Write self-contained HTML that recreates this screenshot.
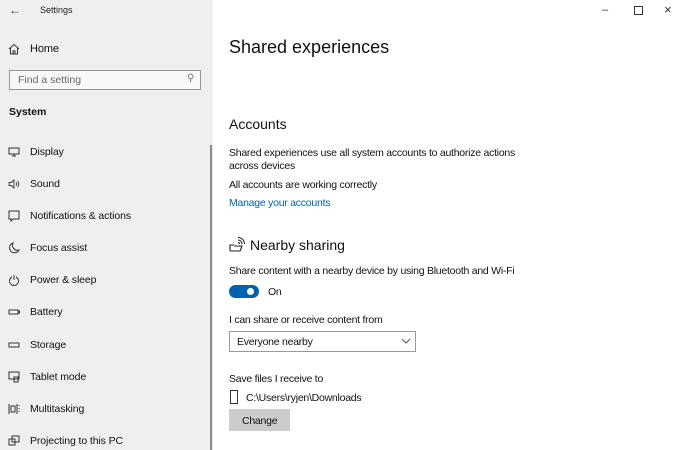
<!DOCTYPE html>
<html><head><style>
body{margin:0;width:680px;height:450px;overflow:hidden;font-family:"Liberation Sans",sans-serif;background:#fff;position:relative;color:#000}
.a{position:absolute;white-space:nowrap}
#side{position:absolute;left:0;top:0;width:213px;height:450px;background:#efefef}
.it{position:absolute;left:30px;font-size:10.5px;color:#111;letter-spacing:-0.1px}
.ic{position:absolute;left:8px;width:12px;height:12px}
.r{font-size:10.5px;color:#111;letter-spacing:-0.25px}
</style></head><body>
<div id="side">
<div class="a" style="left:9px;top:3px;font-size:12px;color:#333">←</div>
<div class="a" style="left:40px;top:5px;font-size:9px;color:#222">Settings</div>
<svg class="ic" style="top:43px" viewBox="0 0 12 12"><path d="M1 6L6 1.5 11 6M2.5 5v6h7V5M5 11V8h2v3" fill="none" stroke="#333" stroke-width="1"/></svg>
<div class="it" style="top:43px;font-size:11px">Home</div>
<div class="a" style="left:9px;top:70px;width:190px;height:18px;border:1px solid #999;background:#f8f8f8"></div>
<div class="a" style="left:18px;top:74px;font-size:10.5px;color:#666">Find a setting</div>
<div class="a" style="left:187px;top:73px;font-size:10px;color:#777">⚲</div>
<div class="a" style="left:9px;top:106px;font-size:10.5px;font-weight:bold;color:#111">System</div>
<div class="a" style="left:210px;top:145px;width:2px;height:305px;background:#8a8a8a"></div>
<svg class="ic" style="top:146px" viewBox="0 0 12 12"><path d="M1 2h10v6H1zM6 8v2M4 10h4" fill="none" stroke="#333"/></svg>
<div class="it" style="top:146px">Display</div>
<svg class="ic" style="top:178px" viewBox="0 0 12 12"><path d="M1 4.5h2l3-2.5v8L3 7.5H1zM8 4.5a2 2 0 0 1 0 3M9.5 3a4 4 0 0 1 0 6" fill="none" stroke="#333" stroke-width="0.9"/></svg>
<div class="it" style="top:178px">Sound</div>
<svg class="ic" style="top:210px" viewBox="0 0 12 12"><path d="M1 1h10v8H5l-2 2V9H1z" fill="none" stroke="#333"/></svg>
<div class="it" style="top:210px">Notifications &amp; actions</div>
<svg class="ic" style="top:242px" viewBox="0 0 12 12"><path d="M5 1a5 5 0 1 0 6 7A5 5 0 0 1 5 1z" fill="none" stroke="#333"/></svg>
<div class="it" style="top:242px">Focus assist</div>
<svg class="ic" style="top:274px" viewBox="0 0 12 12"><path d="M4 3a4.5 4.5 0 1 0 4 0M6 1v5" fill="none" stroke="#333"/></svg>
<div class="it" style="top:274px">Power &amp; sleep</div>
<svg class="ic" style="top:306px" viewBox="0 0 12 12"><path d="M1 4h9v4H1zM10 5h1.5v2H10" fill="none" stroke="#333"/></svg>
<div class="it" style="top:306px">Battery</div>
<svg class="ic" style="top:339px" viewBox="0 0 12 12"><path d="M1 4h10v4H1z" fill="none" stroke="#333"/></svg>
<div class="it" style="top:339px">Storage</div>
<svg class="ic" style="top:371px" viewBox="0 0 12 12"><path d="M1 1h10v7H1zM6 6h4v5H6z" fill="none" stroke="#333"/></svg>
<div class="it" style="top:371px">Tablet mode</div>
<svg class="ic" style="top:403px" viewBox="0 0 12 12"><path d="M1 1v10M9 1v10M3 3h4v6H3zM11 2v1M11 5v1M11 8v1" fill="none" stroke="#333"/></svg>
<div class="it" style="top:403px">Multitasking</div>
<svg class="ic" style="top:435px" viewBox="0 0 12 12"><path d="M4 1h7v6H4zM1 4h6v6H1z" fill="none" stroke="#333"/></svg>
<div class="it" style="top:435px">Projecting to this PC</div>
</div>

<div class="a" style="left:602px;top:4px;font-size:11px;color:#333">–</div>
<div class="a" style="left:634px;top:6px;width:7px;height:7px;border:1px solid #333"></div>
<div class="a" style="left:664px;top:2px;font-size:13px;color:#333">×</div>

<div class="a" style="left:229px;top:37px;font-size:18px;color:#111">Shared experiences</div>
<div class="a" style="left:229px;top:116px;font-size:14px;color:#111">Accounts</div>
<div class="a r" style="left:229px;top:147px">Shared experiences use all system accounts to authorize actions</div>
<div class="a r" style="left:229px;top:160px">across devices</div>
<div class="a r" style="left:229px;top:179px">All accounts are working correctly</div>
<div class="a r" style="left:229px;top:197px;color:#0063b1">Manage your accounts</div>
<svg class="a" style="left:229px;top:237px;width:16px;height:15px" viewBox="0 0 16 15"><path d="M1 14V8h4M1 14h10l2-5H5M9 3a4 4 0 0 1 4 4M9 0.5a6.5 6.5 0 0 1 6.5 6.5M9 5.5a1.5 1.5 0 0 1 1.5 1.5" fill="none" stroke="#222" stroke-width="1.1"/></svg>
<div class="a" style="left:250px;top:237px;font-size:14px;color:#111">Nearby sharing</div>
<div class="a r" style="left:229px;top:265px">Share content with a nearby device by using Bluetooth and Wi-Fi</div>
<div class="a" style="left:229px;top:285px;width:30px;height:13px;border-radius:7px;background:#0063b1"></div>
<div class="a" style="left:247px;top:288px;width:7px;height:7px;border-radius:50%;background:#fff"></div>
<div class="a r" style="left:268px;top:286px">On</div>
<div class="a r" style="left:229px;top:314px">I can share or receive content from</div>
<div class="a" style="left:229px;top:331px;width:185px;height:19px;border:1px solid #999"></div>
<div class="a r" style="left:237px;top:336px">Everyone nearby</div>
<svg class="a" style="left:401px;top:338px;width:10px;height:7px" viewBox="0 0 10 7"><path d="M1 1l4 4 4-4" fill="none" stroke="#555"/></svg>
<div class="a r" style="left:229px;top:373px">Save files I receive to</div>
<div class="a" style="left:230px;top:390px;width:6px;height:12px;border:1px solid #333"></div>
<div class="a r" style="left:246px;top:392px">C:\Users\ryjen\Downloads</div>
<div class="a" style="left:229px;top:409px;width:61px;height:22px;background:#ccc"></div>
<div class="a r" style="left:242px;top:415px">Change</div>
</body></html>
